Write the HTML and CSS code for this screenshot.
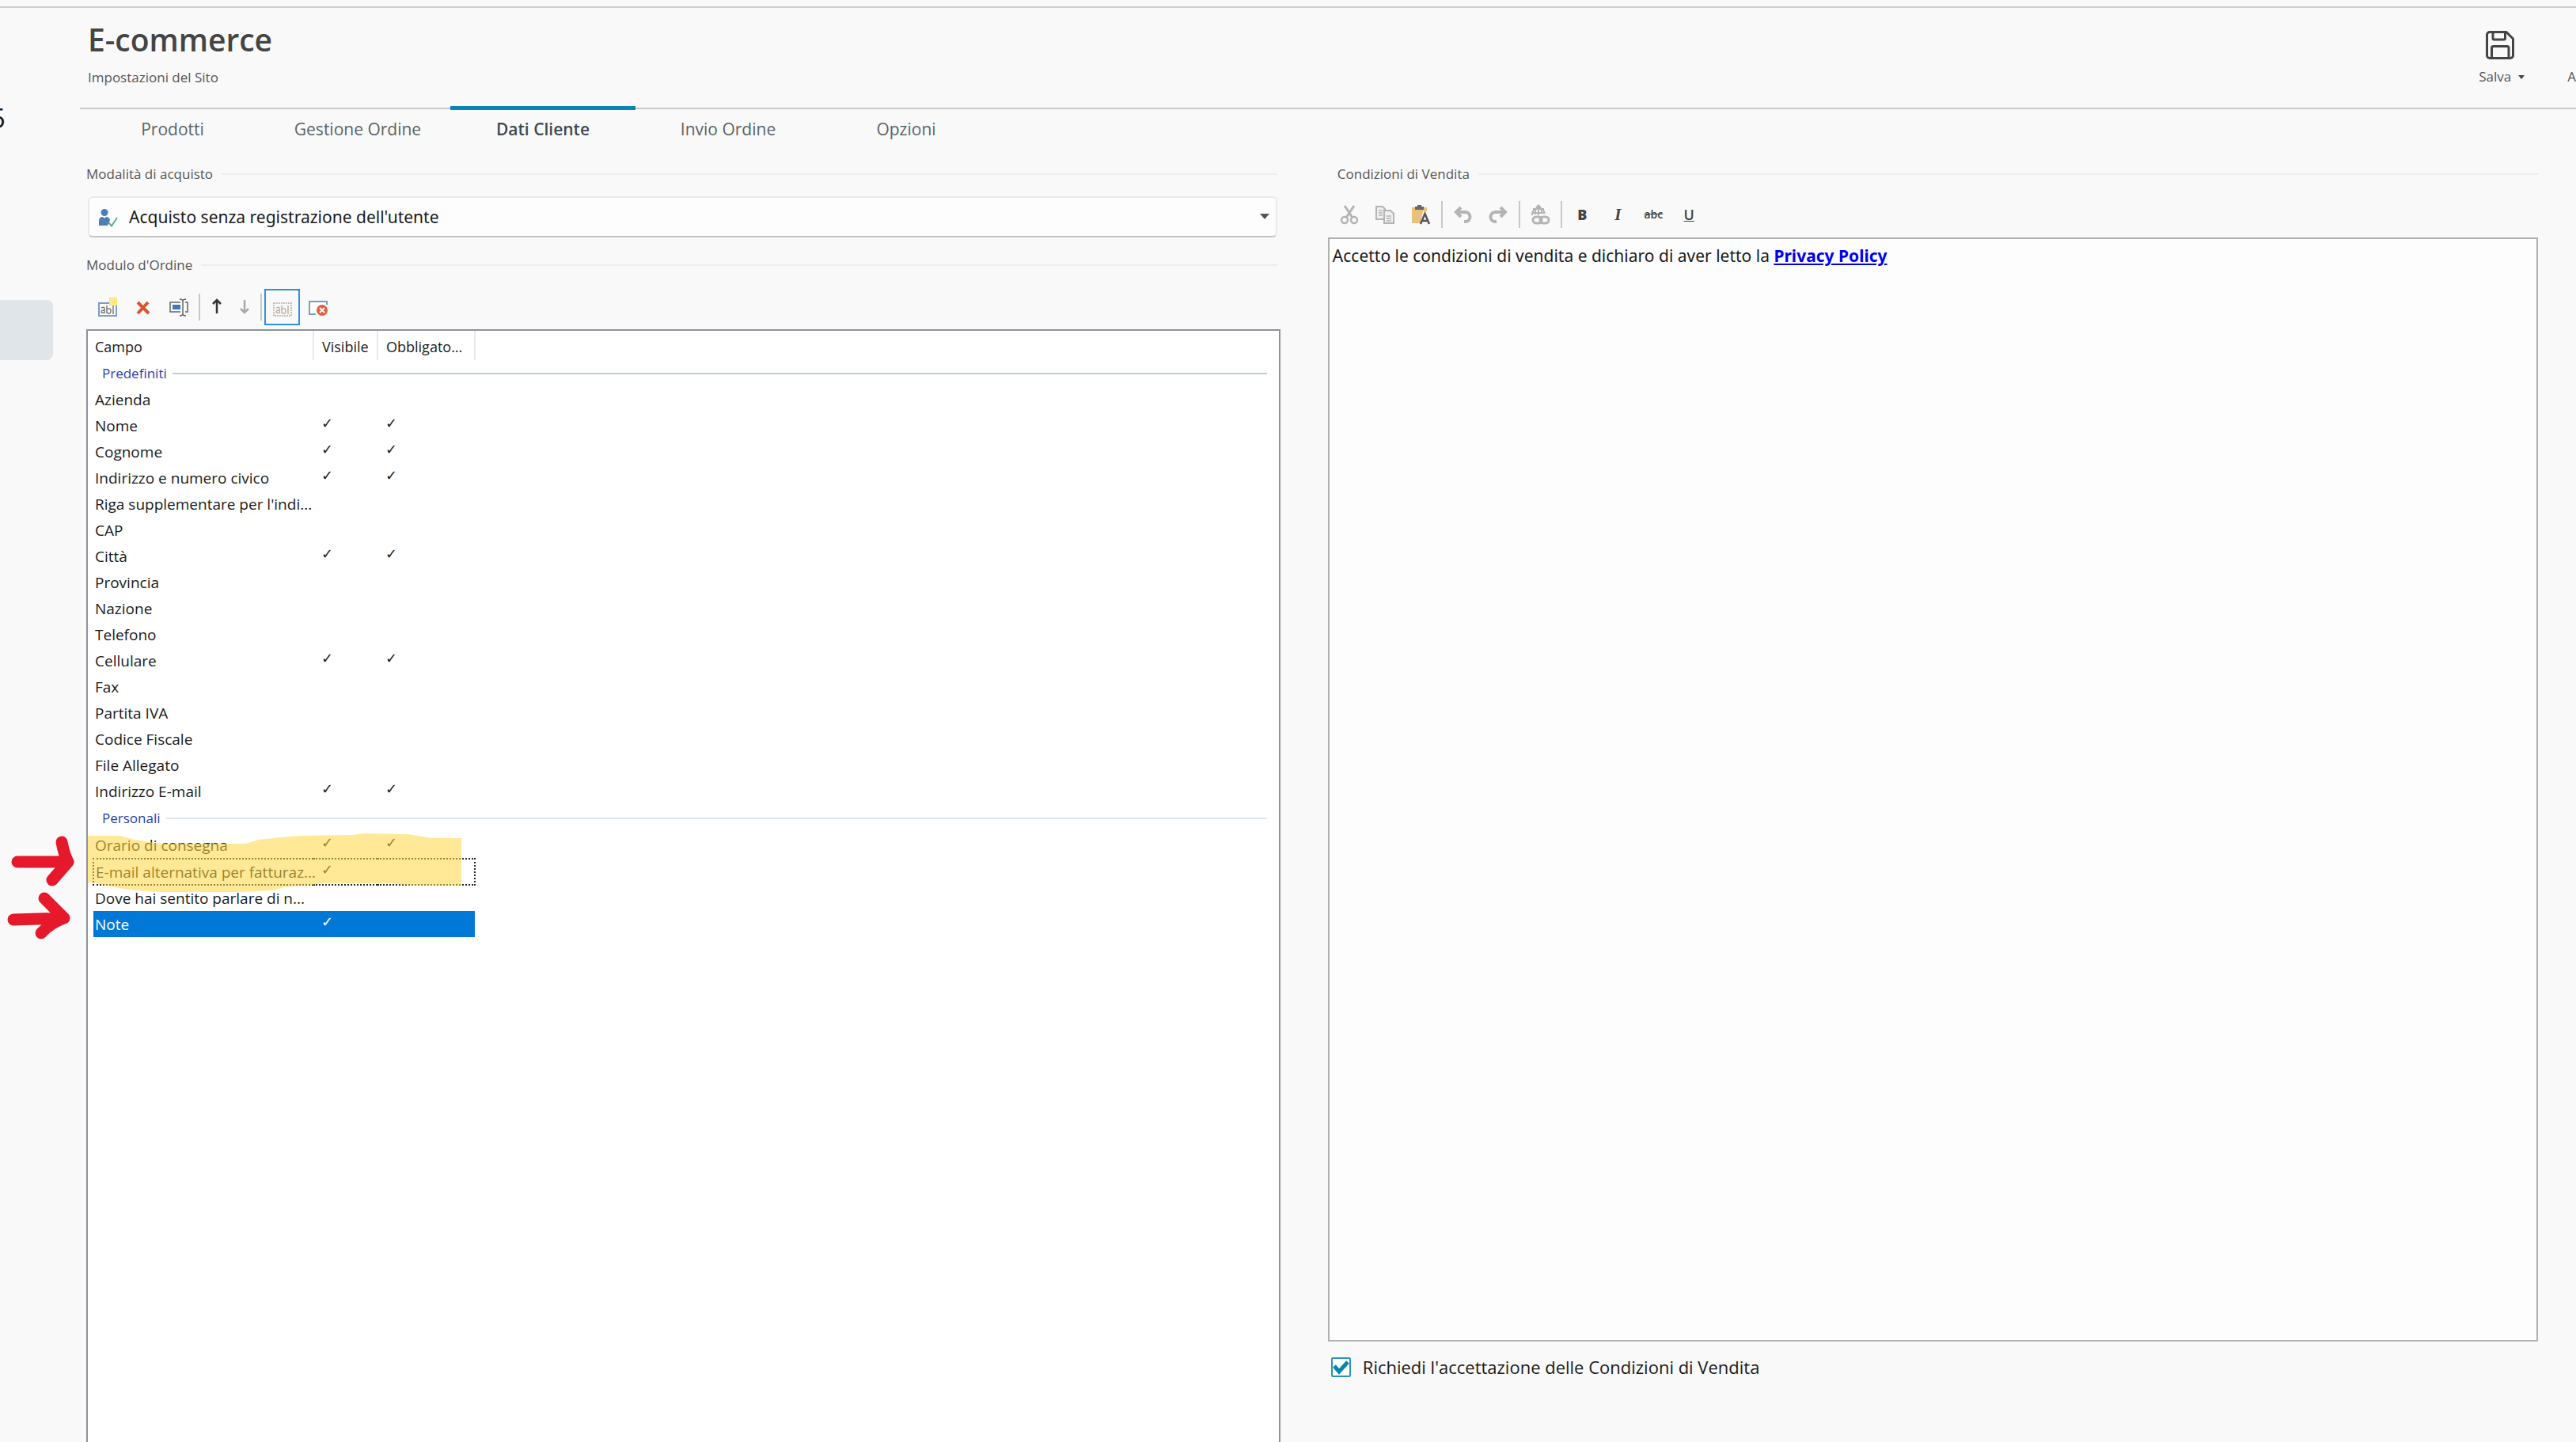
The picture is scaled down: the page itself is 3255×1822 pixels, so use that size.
FILE: index.html
```html
<!DOCTYPE html>
<html lang="it">
<head>
<meta charset="utf-8">
<meta name="viewport" content="width=device-width, initial-scale=1">
<title>E-commerce - Impostazioni del Sito</title>
<link rel="stylesheet" href="styles.css">
</head>
<body>
<div class="app">
  <aside class="sidebar">
    <span class="sidebar-title">5</span>
    <div class="sidebar-item"></div>
  </aside>

  <main class="main">
    <header class="header">
      <div>
        <h1 class="title">E-commerce</h1>
        <p class="subtitle">Impostazioni del Sito</p>
      </div>
      <div class="actions">
        <button class="action" type="button">
          <svg class="action-icon" viewBox="0 0 36 36" fill="none" stroke="#444" stroke-width="3" stroke-linejoin="round"><path d="M5 1.500H26L34.500 10V31a3.500 3.500 0 0 1-3.500 3.500H5A3.500 3.500 0 0 1 1.500 31V5A3.500 3.500 0 0 1 5 1.500Z"/><path d="M9 2V9.500a1.500 1.500 0 0 0 1.500 1.500H23a1.500 1.500 0 0 0 1.500-1.500V2M7.500 34V21.500A2 2 0 0 1 9.500 19.500H27a2 2 0 0 1 2 2V34"/></svg>
          <span class="action-label">Salva <svg class="caret" viewBox="0 0 8 5"><path d="M0 0H8L4 5Z" fill="#444"/></svg></span>
        </button>
        <button class="action action-next" type="button"><span class="action-label">A</span></button>
      </div>
    </header>

    <nav class="tabs">
      <a class="tab" href="#prodotti">Prodotti</a>
      <a class="tab" href="#gestione">Gestione Ordine</a>
      <a class="tab tab-active" href="#dati" aria-current="page">Dati Cliente</a>
      <a class="tab" href="#invio">Invio Ordine</a>
      <a class="tab tab-last" href="#opzioni">Opzioni</a>
    </nav>

    <div class="panels">
      <section class="panel">
        <div class="legend legend-inset"><label for="mode">Modalità di acquisto</label></div>
        <div class="combo">
          <svg class="combo-icon" viewBox="0 0 26 24"><circle cx="9" cy="5.500" r="4.500" fill="#4a7fb8"/><path d="M2 22V16q0-5 5-5l2 2 2-2q4 0 5 4l-3 7Z" fill="#4a7fb8"/><path d="M14 18l4 4.500L25 12" fill="none" stroke="#5fae8c" stroke-width="2"/></svg>
          <select class="combo-select" id="mode"><option>Acquisto senza registrazione dell'utente</option></select>
          <svg class="combo-caret" viewBox="0 0 12 7"><path d="M0 0H12L6 7Z" fill="#555"/></svg>
        </div>

        <h2 class="legend legend-inset">Modulo d'Ordine</h2>
        <div class="toolbar">
          <button class="tool" type="button" aria-label="Aggiungi campo"><svg viewBox="0 0 26 26"><path d="M2 8H24V24H2Z" fill="#fff" stroke="#7a9cc0" stroke-width="2"/><g fill="none" stroke="#777" stroke-width="1.500"><path d="M5 14q4-2 4 1v6M9 17q-4 0-4 2t4 1M12 11v10M12 16q5-3 5 2t-5 2M20 11v11"/></g><path d="M15 1h10v10H15Z" fill="#f5d650"/><path d="M15 3h10M15 6h10M15 9h10M17 1v10M20 1v10M23 1v10" stroke="#fff5c0"/></svg></button>
          <button class="tool" type="button" aria-label="Elimina"><svg viewBox="0 0 26 26"><path d="M6 7L20 21M19 7L6 21" fill="none" stroke="#d9552f" stroke-width="4"/></svg></button>
          <button class="tool" type="button" aria-label="Rinomina"><svg viewBox="0 0 26 26"><path d="M15 7H2V19H15M21 7H24V19H21" fill="none" stroke="#666" stroke-width="1.500"/><path d="M5 10H15V16H5Z" fill="#3f78b8"/><path d="M14 3q4 0 4 3V21q0 3-4 3M22 3q-4 0-4 3M22 24q-4 0-4-3" fill="none" stroke="#666" stroke-width="1.500"/></svg></button>
          <span class="rule"></span>
          <button class="tool tool-narrow" type="button" aria-label="Sposta su"><svg viewBox="0 0 26 26"><path d="M13 21V5M8 9L13 4L18 9" fill="none" stroke="#333" stroke-width="2.500"/></svg></button>
          <button class="tool tool-narrow" type="button" aria-label="Sposta giù"><svg viewBox="0 0 26 26"><path d="M13 4V20M8 15L13 20L18 15" fill="none" stroke="#a8a8a8" stroke-width="2.500"/></svg></button>
          <span class="rule"></span>
          <button class="tool tool-on" type="button" aria-label="Campo di testo" aria-pressed="true"><svg viewBox="0 0 26 26"><path d="M2 8H24V24H2Z" fill="none" stroke="#b8ae98" stroke-width="1.500" stroke-dasharray="2 1"/><g fill="none" stroke="#bdb49f" stroke-width="1.500"><path d="M5 14q4-2 4 1v6M9 17q-4 0-4 2t4 1M12 11v10M12 16q5-3 5 2t-5 2M20 11v11"/></g></svg></button>
          <button class="tool" type="button" aria-label="Nascondi campo"><svg viewBox="0 0 26 26"><path d="M10 22H2V6H24V10" fill="#fff" stroke="#7a9cc0" stroke-width="2"/><circle cx="18" cy="17" r="7" fill="#e0603f"/><path d="M15 14L21 20M21 14L15 20" stroke="#fff" stroke-width="2"/></svg></button>
        </div>

        <div class="list">
          <table class="fields">
            <colgroup><col class="col-name"><col class="col-visible"><col class="col-required"><col></colgroup>
            <thead>
              <tr class="head"><th scope="col">Campo</th><th scope="col">Visibile</th><th scope="col">Obbligato...</th><td></td></tr>
            </thead>
            <tbody>
              <tr class="group"><th colspan="4" scope="rowgroup"><span class="group-label">Predefiniti</span></th></tr>
              <tr><td>Azienda</td><td></td><td></td></tr>
              <tr><td>Nome</td><td class="check">✓</td><td class="check">✓</td></tr>
              <tr><td>Cognome</td><td class="check">✓</td><td class="check">✓</td></tr>
              <tr><td>Indirizzo e numero civico</td><td class="check">✓</td><td class="check">✓</td></tr>
              <tr><td>Riga supplementare per l'indi...</td><td></td><td></td></tr>
              <tr><td>CAP</td><td></td><td></td></tr>
              <tr><td>Città</td><td class="check">✓</td><td class="check">✓</td></tr>
              <tr><td>Provincia</td><td></td><td></td></tr>
              <tr><td>Nazione</td><td></td><td></td></tr>
              <tr><td>Telefono</td><td></td><td></td></tr>
              <tr><td>Cellulare</td><td class="check">✓</td><td class="check">✓</td></tr>
              <tr><td>Fax</td><td></td><td></td></tr>
              <tr><td>Partita IVA</td><td></td><td></td></tr>
              <tr><td>Codice Fiscale</td><td></td><td></td></tr>
              <tr><td>File Allegato</td><td></td><td></td></tr>
              <tr><td>Indirizzo E-mail</td><td class="check">✓</td><td class="check">✓</td></tr>
            </tbody>
            <tbody>
              <tr class="group group-light"><th colspan="4" scope="rowgroup"><span class="group-label">Personali</span></th></tr>
              <tr><td>Orario di consegna</td><td class="check">✓</td><td class="check">✓</td></tr>
              <tr class="focused"><td>E-mail alternativa per fatturaz...</td><td class="check">✓</td><td></td></tr>
              <tr><td>Dove hai sentito parlare di n...</td><td></td><td></td></tr>
              <tr class="selected"><td>Note</td><td class="check">✓</td><td></td></tr>
            </tbody>
          </table>
        </div>
      </section>

      <section class="panel panel-terms">
        <h2 class="legend legend-terms">Condizioni di Vendita</h2>
        <div class="toolbar toolbar-terms">
          <button class="tool" type="button" aria-label="Taglia"><svg viewBox="0 0 26 26" fill="none" stroke="#b4b4b4" stroke-width="2.500"><path d="M7 2L17 17M19 2L9 17" stroke-width="3"/><circle cx="7" cy="20" r="4"/><circle cx="19" cy="20" r="4"/></svg></button>
          <button class="tool" type="button" aria-label="Copia"><svg viewBox="0 0 26 26" fill="#f0f0f0" stroke="#b4b4b4" stroke-width="2"><path d="M2 3H10L13 6V19H2Z"/><path d="M12 8H20L24 12V24H12Z"/><path d="M5 8h5M5 11h5M5 14h5M15 15h6M15 18h6M15 21h6" stroke-width="1.500"/></svg></button>
          <button class="tool" type="button" aria-label="Incolla testo"><svg viewBox="0 0 26 26"><path d="M2 4H21V24H2Z" fill="#ebbf7c"/><path d="M6 3H9V1H14V3H17V7H6Z" fill="#666"/><path d="M12 26L16 9H21L26 26" fill="#f9f9f9"/><path d="M13 25L18.500 12L24 25M15 21H22" fill="none" stroke="#555" stroke-width="2.500"/></svg></button>
          <span class="rule"></span>
          <button class="tool" type="button" aria-label="Annulla"><svg viewBox="0 0 26 26" fill="none" stroke="#b4b4b4" stroke-width="4"><path d="M11 4L5 10L11 16M5 10H16a6 6 0 0 1 1 12h-2"/></svg></button>
          <button class="tool" type="button" aria-label="Ripeti"><svg viewBox="0 0 26 26" fill="none" stroke="#b4b4b4" stroke-width="4"><path d="M16 4L22 10L16 16M22 10H10a6 6 0 0 0-1 12h2"/></svg></button>
          <span class="rule"></span>
          <button class="tool" type="button" aria-label="Inserisci collegamento"><svg viewBox="0 0 26 26" fill="none" stroke="#b4b4b4" stroke-width="2"><path d="M3 14a8 8 0 1 1 16-2M11 1v13M11 1Q6 6 7 13M11 1Q16 6 15 12M4 6H18M3 11H19"/><g stroke-width="3"><rect x="4" y="16" width="11" height="8" rx="4"/><rect x="13" y="16" width="11" height="8" rx="4"/></g></svg></button>
          <span class="rule"></span>
          <button class="tool tool-text" type="button"><b>B</b></button>
          <button class="tool tool-text tool-italic" type="button"><i>I</i></button>
          <button class="tool tool-text tool-strike" type="button"><s>abc</s></button>
          <button class="tool tool-text" type="button"><u>U</u></button>
        </div>
        <div class="editor" contenteditable="true" role="textbox" aria-label="Condizioni di Vendita">Accetto le condizioni di vendita e dichiaro di aver letto la <a class="policy" href="#privacy">Privacy Policy</a></div>
        <label class="accept"><input class="accept-box" type="checkbox" checked> Richiedi l'accettazione delle Condizioni di Vendita</label>
      </section>
    </div>
  </main>

  <svg class="markup" viewBox="0 0 620 1200" aria-hidden="true">
    <path fill="#ffd540" fill-opacity=".55" d="M111 1056H151L171 1061L196 1065L212 1066H310L327 1061L355 1058L380 1056L445 1055L461 1053L516 1054L527 1056L547 1059H583V1119H522L492 1116H404L396 1118L359 1121L343 1125L306 1127H196L163 1124L139 1120L122 1116L111 1115Z"/>
    <g fill="none" stroke="#e5192b" stroke-width="15" stroke-linecap="round" stroke-linejoin="round"><path d="M22 1089H86M78 1064Q81 1080 86 1089L66 1112"/><path d="M17 1162L81 1160M56 1135L81 1160Q64 1166 52 1179"/></g>
  </svg>
</div>
</body>
</html>
```

FILE: styles.css
```css
* { box-sizing: border-box; }

body {
  margin: 0;
  background: #f9f9f9;
  color: #1a1a1a;
  font-family: "Open Sans", "Noto Sans", sans-serif;
  font-size: 21px;
  line-height: 30px;
}

button, select, input { font: inherit; color: inherit; }

.app {
  position: relative;
  display: flex;
  height: 100vh;
  padding-top: 9px;
  overflow: hidden;
}
.app::before {
  content: "";
  position: absolute;
  inset: 8px 0 auto;
  height: 2px;
  background: #cfcfcf;
}

.sidebar { flex: 0 0 101px; padding-top: 120px; }
.sidebar-title {
  display: flex;
  justify-content: flex-end;
  width: 7px;
  height: 40px;
  font-size: 34px;
  line-height: 40px;
}
.sidebar-item {
  width: 67px;
  height: 76px;
  margin-top: 210px;
  background: #e0e5e9;
  border-radius: 0 8px 8px 0;
}

.main { flex: 1; display: flex; flex-direction: column; min-width: 0; }

.header {
  display: flex;
  justify-content: space-between;
  height: 127px;
  padding: 14px 0 0 10px;
}
.title { margin: 0; font-size: 39px; line-height: 54px; font-weight: 600; color: #444; }
.subtitle { margin: 8px 0 0; font-size: 17px; line-height: 26px; color: #555; }

.actions { display: flex; align-items: flex-start; gap: 54px; padding-top: 16px; }
.action { padding: 0; border: 0; background: none; color: #555; text-align: left; }
.action-icon { display: block; width: 36px; height: 36px; margin: 0 0 9px 9px; }
.action-label { display: flex; align-items: center; gap: 9px; font-size: 17px; line-height: 26px; }
.action-next { padding-top: 45px; }
.caret { width: 8px; height: 5px; }

.tabs { display: flex; height: 57px; border-top: 2px solid #c9c9c9; }
.tab {
  width: 234px;
  padding-top: 10px;
  color: #5a6468;
  font-size: 21px;
  text-align: center;
  text-decoration: none;
}
.tab-active {
  margin-top: -4px;
  padding-top: 9px;
  border-top: 5px solid #0a84b0;
  color: #3c4a50;
  font-weight: 600;
}
.tab-last { width: 216px; }

.panels {
  flex: 1;
  display: grid;
  grid-template-columns: 74fr 75fr;
  gap: 60px;
  min-height: 0;
  padding: 14px 48px 0 8px;
}
.panel { display: flex; flex-direction: column; min-width: 0; min-height: 0; }

.legend {
  display: flex;
  align-items: center;
  gap: 11px;
  height: 26px;
  margin: 0;
  color: #555;
  font-size: 17px;
  font-weight: 400;
}
.legend::after { content: ""; flex: 1; height: 2px; background: #eeeeee; }
.legend-inset { margin-right: 4px; }
.legend-terms { padding-left: 12px; }

.combo { position: relative; margin: 15px 4px 22px 2px; }
.combo-select {
  display: block;
  width: 100%;
  height: 52px;
  padding: 0 40px 0 50px;
  appearance: none;
  background: #fdfdfd;
  border: 2px solid #e6ebf0;
  border-bottom-color: #c4c4c4;
  border-radius: 6px;
  color: #1a1a1a;
  font-family: "Noto Sans", "Open Sans", sans-serif;
  font-size: 21px;
}
.combo-icon { position: absolute; top: 15px; left: 12px; width: 26px; height: 24px; }
.combo-caret { position: absolute; top: 22px; right: 10px; width: 12px; height: 7px; }

.toolbar { display: flex; align-items: center; height: 46px; margin: 17px 0 5px; padding-left: 4px; }
.tool {
  display: flex;
  align-items: center;
  justify-content: center;
  width: 45px;
  height: 46px;
  padding: 0;
  border: 0;
  background: none;
  color: #444;
}
.tool svg { width: 26px; height: 26px; }
.tool-narrow { width: 35px; }
.tool-on { border: 2px solid #2f8fe0; }
.tool-text { font-size: 18px; font-weight: 600; }
.tool-italic { font-family: "Liberation Serif", serif; font-size: 21px; }
.tool-strike { font-size: 14px; }
.rule { width: 2px; height: 34px; margin: 0 3px; background: #c8c8c8; }
.toolbar-terms { height: 46px; margin: 15px 0 6px; padding-left: 5px; }

.list { flex: 1; min-height: 0; background: #fff; border: 2px solid #8d929b; border-bottom: 0; padding: 0 15px 0 6px; }
.fields {
  width: 100%;
  table-layout: fixed;
  border-collapse: collapse;
  font-size: 19px;
  line-height: 24px;
}
.col-name { width: 278px; }
.col-visible { width: 81px; }
.col-required { width: 123px; }
.fields th, .fields td { height: 33px; padding: 0 0 0 2px; font-weight: 400; text-align: left; white-space: nowrap; }
.fields .head th { height: 37px; padding-top: 2px; border-right: 2px solid #e8e8e8; font-size: 18px; }
.fields .head th + th { padding-left: 10px; }
.fields .group th { padding-left: 11px; }
.fields .group-light th { height: 36px; }
.group-label { display: flex; align-items: center; gap: 7px; color: #1f3fae; font-size: 17px; }
.group-label::after { content: ""; flex: 1; height: 2px; background: #bccbe9; }
.group-light .group-label::after { background: #dde5f3; }
.fields .check { padding: 0 0 6px 10px; font-family: "DejaVu Sans", sans-serif; font-size: 18px; }
.focused td { border-top: 2px dotted #222; border-bottom: 2px dotted #222; }
.focused td:first-child { border-left: 2px dotted #222; }
.focused td:last-child { border-right: 2px dotted #222; }
.selected td { background: #0078d7; color: #fff; }

.editor {
  flex: 1;
  min-height: 0;
  padding: 6px 4px;
  border: 2px solid #b0b0b0;
  background: #fdfdfd;
  font-family: "Noto Sans", "Open Sans", sans-serif;
  font-size: 21px;
}
.policy { color: #0000ee; font-weight: 700; }

.accept { display: flex; align-items: center; gap: 15px; height: 30px; margin: 17px 0 80px 4px; font-size: 22px; }
.accept-box {
  width: 25px;
  height: 25px;
  margin: 0;
  appearance: none;
  border: 2px solid #2a94bb;
  border-radius: 2px;
  background: #fff url("data:image/svg+xml,%3Csvg xmlns='http://www.w3.org/2000/svg' viewBox='0 0 21 21'%3E%3Cpath d='M2 9L8 16L19 4' fill='none' stroke='%230a84b0' stroke-width='5'/%3E%3C/svg%3E") center / 21px;
}

.markup { position: absolute; top: 0; left: 0; width: 620px; height: 1200px; pointer-events: none; }
```
